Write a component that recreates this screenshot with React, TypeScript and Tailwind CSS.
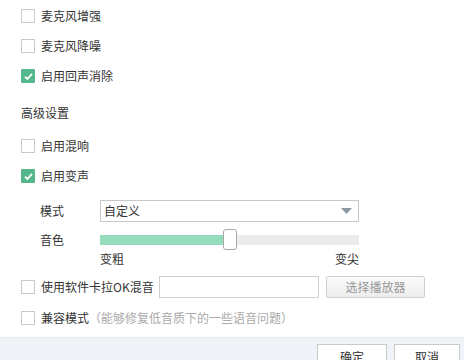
import React from "react";

function Check({ checked }: { checked?: boolean }) {
  if (checked)
    return (
      <span className="flex h-[14px] w-[14px] shrink-0 items-center justify-center rounded-[1px] bg-[#55b88d]">
        <svg width="11" height="11" viewBox="0 0 11 11">
          <path d="M2 5.6 L4.4 8 L9 2.8" fill="none" stroke="#fff" strokeWidth="1.8" />
        </svg>
      </span>
    );
  return <span className="h-[14px] w-[14px] shrink-0 border border-[#c9c9c9] bg-white" />;
}

function CheckRow({ label, checked, extra }: { label: string; checked?: boolean; extra?: React.ReactNode }) {
  return (
    <div className="flex h-[30px] items-center pl-[21px]">
      <Check checked={checked} />
      <span className="ml-[6px] text-[12px] text-[#333]">{label}</span>
      {extra}
    </div>
  );
}

export default function App() {
  const value = 50;
  return (
    <div
      className="h-[360px] w-[464px] overflow-hidden bg-white pt-[1px]"
      style={{ fontFamily: '"Noto Sans CJK SC", "Noto Sans", sans-serif' }}
    >
      <CheckRow label="麦克风增强" />
      <CheckRow label="麦克风降噪" />
      <CheckRow label="启用回声消除" checked />

      <div className="mt-[7px] flex h-[30px] items-center pl-[21px] text-[12px] text-[#333]">高级设置</div>

      <div className="mt-[3px]">
        <CheckRow label="启用混响" />
        <CheckRow label="启用变声" checked />
      </div>

      <div className="mt-[9px] flex h-[22px] items-center">
        <span className="w-[100px] pl-[40px] text-[12px] text-[#333]">模式</span>
        <div className="flex h-[22px] w-[259px] items-center justify-between border border-[#c8c8c8] bg-white pl-[3px] pr-[6px] text-[12px] text-[#333]">
          <span>自定义</span>
          <svg width="11" height="6" viewBox="0 0 11 6">
            <path d="M0 0 H11 L5.5 6 Z" fill="#8c9aa6" />
          </svg>
        </div>
      </div>

      <div className="mt-[6px] flex h-[23px] items-center">
        <span className="w-[100px] pl-[40px] text-[12px] text-[#333]">音色</span>
        <div className="relative flex h-[23px] w-[259px] items-center">
          <div className="h-[10px] w-full bg-[#ececec]">
            <div className="h-full bg-[#95dcbc]" style={{ width: `${value}%` }} />
          </div>
          <div className="absolute left-[123px] top-[1px] h-[21px] w-[14px] rounded-[3px] border border-[#a9a9a9] bg-white" />
        </div>
      </div>

      <div className="flex h-[16px] w-[359px] items-center justify-between pl-[100px] text-[12px] text-[#333]">
        <span>变粗</span>
        <span>变尖</span>
      </div>

      <div className="mt-[9px] flex h-[22px] items-center pl-[21px]">
        <Check />
        <span className="ml-[6px] w-[118px] whitespace-nowrap text-[12px] text-[#333]">使用软件卡拉OK混音</span>
        <div className="h-[22px] w-[160px] border border-[#cfcfcf] bg-white" />
        <button className="ml-[7px] h-[22px] w-[99px] rounded-[2px] border border-[#cfcfcf] bg-gradient-to-b from-[#fbfbfb] to-[#ededed] text-[12px] text-[#999]">
          选择播放器
        </button>
      </div>

      <div className="mt-[5px]">
        <CheckRow
          label="兼容模式"
          extra={<span className="whitespace-nowrap text-[12px] text-[#aaa]">（能够修复低音质下的一些语音问题）</span>}
        />
      </div>

      <div className="mt-[4px] flex h-[40px] items-start justify-end gap-[7px] border-t border-[#e4eaf1] bg-[#f0f4f9] pr-[4px] pt-[6px]">
        <button className="h-[26px] w-[70px] border border-[#c9c9c9] bg-white text-[12px] text-[#333]">确定</button>
        <button className="h-[26px] w-[66px] border border-[#c9c9c9] bg-white text-[12px] text-[#333]">取消</button>
      </div>
    </div>
  );
}
